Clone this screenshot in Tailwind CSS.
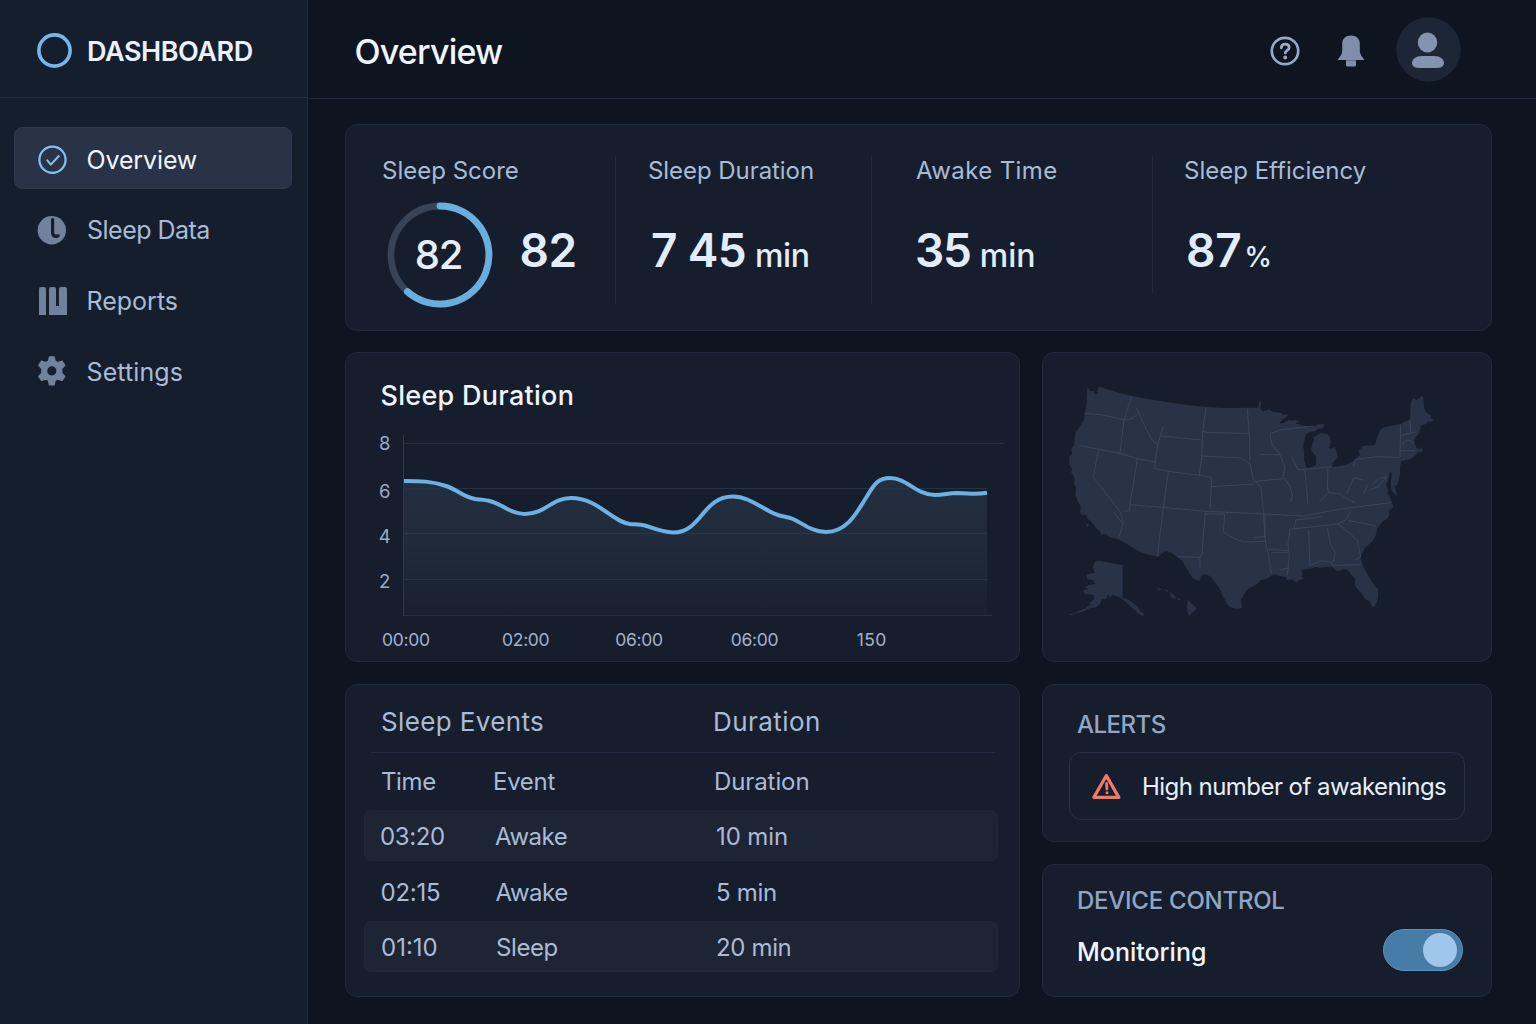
<!DOCTYPE html>
<html lang="en">
<head>
<meta charset="utf-8">
<title>Sleep Dashboard</title>
<script src="https://cdn.jsdelivr.net/npm/@tailwindcss/browser@4"></script>
</head>
<body class="w-[1536px] h-[1024px] overflow-hidden bg-[#0e1420] font-['Inter',sans-serif] text-[#a9bbd6] leading-none whitespace-nowrap flex">

<!-- Sidebar -->
<aside class="w-[308px] h-full shrink-0 bg-[#151e2d] border-r border-[#222b3d]">
  <div class="h-[98px] border-b border-[#253044] flex items-center pl-[37px] gap-[15px]">
    <svg class="size-[35px] shrink-0 mt-[4px]" viewBox="0 0 35 35" fill="none"><circle cx="17.5" cy="17.5" r="15.6" stroke="#74b7ea" stroke-width="3.6"/></svg>
    <span class="text-[27px] font-semibold text-[#eaf1fd] tracking-[-0.45px] mt-[5px]">DASHBOARD</span>
  </div>
  <nav class="pt-[29px] pl-[14px] flex flex-col">
    <a class="h-[62px] w-[278px] rounded-[8px] bg-[#293347] border border-[#2e384c] flex items-center pl-[22px]">
      <svg class="size-[30px] shrink-0 mt-[4px]" viewBox="0 0 30 30" fill="none" stroke="#85c1ee" stroke-linecap="round" stroke-linejoin="round"><circle cx="15.5" cy="14.8" r="13.1" stroke-width="2.2"/><path d="M10.2 15.2l3.6 4.4 8-8.6" stroke-width="2"/></svg>
      <span class="text-[25px] tracking-[-0.13px] text-[#eff4fd] ml-[19.500px] mt-[4px]">Overview</span>
    </a>
    <a class="h-[71px] mt-[5px] flex items-center pl-[23px]">
      <svg class="size-[30px] shrink-0" viewBox="0 0 30 30"><circle cx="14.8" cy="15.2" r="14.2" fill="#71829d"/><path d="M15.6 4.500v12.900q0 3.800 3.600 4l2-.6" fill="none" stroke="#151e2d" stroke-width="3.2" stroke-linecap="round" stroke-linejoin="round"/></svg>
      <span class="text-[25px] tracking-[-0.51px] ml-[20px] mt-[1px]">Sleep Data</span>
    </a>
    <a class="h-[71px] flex items-center pl-[23px]">
      <svg class="size-[30px] shrink-0 mt-[1px]" viewBox="0 0 30 30" fill="#71829d"><path d="M2 3a2 2 0 0 1 2-2h3a2 2 0 0 1 2 2v26H2zM12 3a2 2 0 0 1 2-2h3a2 2 0 0 1 2 2v17h3V3a2 2 0 0 1 2-2h4a2 2 0 0 1 2 2v26H12z"/></svg>
      <span class="text-[25px] ml-[19.5px] mt-[1px]">Reports</span>
    </a>
    <a class="h-[71px] flex items-center pl-[23px]">
      <svg class="size-[30px] shrink-0 -mt-[2px]" viewBox="0 0 30 30"><path fill="#71829d" fill-rule="evenodd" stroke="#71829d" stroke-width="1.2" stroke-linejoin="round" d="M12.4 .8h4.8l.9 4.3 2.7 1.5 4.3-1.5 2.8 4.2-3.1 3.3v4.6l3.1 3.1-2.8 4.2-4.3-1.4-2.7 1.5-.9 4.4h-4.8l-.9-4.4-2.7-1.5-4.3 1.4-2.8-4.2 3.1-3.1v-4.6L1.700 9.300l2.800-4.200 4.300 1.500 2.700-1.500zM14.800 9.700a5.200 5.200 0 1 0 0 10.400 5.200 5.200 0 0 0 0-10.400z"/></svg>
      <span class="text-[25px] tracking-[0.1px] ml-[19.500px] mt-[1px]">Settings</span>
    </a>
  </nav>
</aside>

<div class="flex-1 min-w-0 flex flex-col">
  <!-- Top bar -->
  <header class="h-[99px] shrink-0 border-b border-[#1f2a3d] flex items-center pl-[46px] pr-[75px]">
    <h1 class="text-[34px] tracking-[-0.8px] font-medium text-[#f0f5fd] mt-[5px] ml-[0.5px]">Overview</h1>
    <div class="ml-auto flex items-center">
      <svg class="size-[30px] mt-[3px]" viewBox="0 0 30 30" fill="none"><circle cx="15" cy="15" r="13.200" stroke="#97a9c5" stroke-width="2.700"/><path d="M11.200 11.800c.300-2.400 1.900-3.600 4-3.600 2.300 0 4 1.300 4 3.400 0 2.700-3.900 2.900-3.900 5.400" stroke="#97a9c5" stroke-width="2.800" stroke-linecap="round"/><circle cx="15.200" cy="21.500" r="1.900" fill="#97a9c5"/></svg>
      <svg class="w-[28px] h-[32px] ml-[37px] mt-[3px]" viewBox="0 0 28 32" fill="#7f8fab"><path d="M5.200 9c0-5.500 3.500-8.500 8.800-8.500s8.800 3 8.800 8.500v7c0 3 2.200 5.700 4.700 9H.5c2.500-3.300 4.700-6 4.700-9z"/><path d="M9 25.300h10V30q0 1.500-1.500 1.500h-7Q9 31.500 9 30z"/></svg>
      <svg class="size-[65px] ml-[31px] mt-[1px]" viewBox="0 0 65 65" fill="#8494ae"><circle cx="32.500" cy="32.500" r="32.200" fill="#1c2637"/><ellipse cx="31.500" cy="25.500" rx="9.700" ry="10"/><path d="M26 39h12c6 0 10 3 10 7 0 3-2.500 4.800-6 4.800-5 .4-15 .4-20 0-3.500 0-6-1.800-6-4.800 0-4 4-7 10-7z"/></svg>
    </div>
  </header>

  <main class="pl-[37px] pt-[25px] flex flex-col gap-[21px]">
    <!-- Key figures -->
    <section class="w-[1147px] h-[207px] rounded-[12px] bg-[#161e2d] border border-[#202a3d] flex">
      <div class="w-[269px] pl-[36px] pt-[34px]">
        <div class="text-[24px]">Sleep Score</div>
        <div class="mt-[19px] h-[106px] flex items-center">
          <div class="ml-[4.5px] size-[106px] grid place-items-center">
            <svg class="size-[106px] col-start-1 row-start-1" viewBox="-53 -53 106 106" fill="none" stroke-width="6.800"><circle r="49" stroke="#374356"/><path d="M0-49A49 49 0 1 1-32.600 36.600" stroke="#68aedf" stroke-linecap="round"/></svg>
            <span class="col-start-1 row-start-1 text-[40px] tracking-[-1.2px] font-medium text-[#e6eefb] -ml-[2px]">82</span>
          </div>
          <span class="ml-[27px] pb-[11px] text-[46px] font-semibold tracking-[-0.5px] text-[#e3ecfb]">82</span>
        </div>
      </div>
      <div class="w-px h-[148px] mt-[31px] bg-[#222c3f]"></div>
      <div class="w-[255px] pl-[32px] pt-[34px]">
        <div class="text-[24px] tracking-[-0.06px]">Sleep Duration</div>
        <div class="mt-[44px] flex items-baseline text-[#e3ecfb]">
          <span class="ml-[3px] text-[46px] tracking-[-0.7px] font-semibold">7 45</span>
          <span class="ml-[9px] text-[32px] font-medium tracking-[-0.3px]">min</span>
        </div>
      </div>
      <div class="w-px h-[148px] mt-[31px] bg-[#1f293b]"></div>
      <div class="w-[280px] pl-[44px] pt-[34px]">
        <div class="text-[24px] tracking-[0.38px]">Awake Time</div>
        <div class="mt-[44px] flex items-baseline text-[#e3ecfb]">
          <span class="-ml-[1px] text-[46px] tracking-[-1.2px] font-semibold">35</span>
          <span class="ml-[9px] text-[32px] font-medium">min</span>
        </div>
      </div>
      <div class="w-px h-[138px] mt-[31px] bg-[#1f293b]"></div>
      <div class="pl-[31px] pt-[34px]">
        <div class="text-[24px]">Sleep Efficiency</div>
        <div class="mt-[44px] flex items-baseline text-[#e3ecfb]">
          <span class="ml-[2px] text-[46px] tracking-[-0.3px] font-semibold">87</span>
          <span class="ml-[3px] text-[28px] font-medium">%</span>
        </div>
      </div>
    </section>

    <div class="flex gap-[22px]">
      <!-- Duration chart -->
      <section class="w-[675px] h-[310px] rounded-[12px] bg-[#161e2d] border border-[#202a3f]">
        <svg class="w-[673px] h-[308px]" viewBox="346 353 673 308" fill="none" font-family="Inter, sans-serif">
          <defs><linearGradient id="area" x1="0" y1="478" x2="0" y2="615" gradientUnits="userSpaceOnUse"><stop offset="0" stop-color="#232f40"/><stop offset=".5" stop-color="#202a3b"/><stop offset="1" stop-color="#19212f"/></linearGradient></defs>
          <path fill="url(#area)" d="M404 481C420 481 432 481 446 486C458 490 463 497 475 499C488 500 492 501 502 506C510 511 517 514 525 514C545 514 552 498 571 498C598 498 612 522 630 524C636 524.500 640 524.500 645 525.500C655 529 664 532.500 673 532.500C702 532.500 702 496.500 733 496.500C750 496.500 763 510 778 515C783 516.500 788 517 793 519C804 524 812 532 826 532C845 532 855 516 864 501C873 487 876 478 890 478C907 478 916 495 935 495C944 495 948 493 957 493C967 493.500 975 494.500 987 492.700V615H404z"/>
          <path stroke="#263143" d="M404 443.500H1004M404 488.500H987M404 579.500H987M403 615.500H992"/>
          <path stroke="#2b3648" d="M404 533.500H987"/>
          <path stroke="#2d384b" d="M403.500 435V616"/>
          <path stroke="#6cb1e3" stroke-width="4" d="M404 481C420 481 432 481 446 486C458 490 463 497 475 499C488 500 492 501 502 506C510 511 517 514 525 514C545 514 552 498 571 498C598 498 612 522 630 524C636 524.500 640 524.500 645 525.500C655 529 664 532.500 673 532.500C702 532.500 702 496.500 733 496.500C750 496.500 763 510 778 515C783 516.500 788 517 793 519C804 524 812 532 826 532C845 532 855 516 864 501C873 487 876 478 890 478C907 478 916 495 935 495C944 495 948 493 957 493C967 493.500 975 494.500 987 492.700"/>
          <text class="tracking-[0.28px]" x="380.500" y="405" font-size="27" font-weight="500" fill="#eff4fd">Sleep Duration</text>
          <g font-size="18.500" fill="#9aabc4" text-anchor="middle">
            <text x="384.700" y="449.500">8</text><text x="384.700" y="498">6</text><text x="384.700" y="543">4</text><text x="384.700" y="587.500">2</text>
          </g>
          <g class="tracking-[-0.3px]" font-size="17.500" fill="#a3b3cc" text-anchor="middle">
            <text x="405.800" y="646.400">00:00</text><text x="525.700" y="646.400">02:00</text><text x="639" y="646.400">06:00</text><text x="754.500" y="646.400">06:00</text><text class="tracking-[0.3px]" x="871.700" y="646.400">150</text>
          </g>
        </svg>
      </section>

      <!-- Region map -->
      <section class="w-[450px] h-[310px] rounded-[12px] bg-[#161e2d] border border-[#202a3f]">
        <svg class="w-[448px] h-[308px]" viewBox="1043 353 448 308">
          <g transform="translate(1050 370) scale(.33333)">
            <path fill="#283348" d="M112 52L120 62 130 64 134 72 143 71 142 60 148 50 196 65 245 78 300 88 350 96 405 104 460 110 520 114 625 113 628 92 633 98 632 118 640 124 658 118 668 126 690 128 700 134 716 133 708 142 696 150 688 161 704 158 716 150 728 152 738 149 750 156 736 160 752 165 772 168 788 170 808 162 824 163 820 174 806 176 794 184 780 186 768 192 764 206 760 230 763 250 762 270 770 294 785 291 798 285 799 262 790 250 783 240 786 224 792 210 790 202 802 194 812 189 832 191 839 200 842 215 838 234 846 236 855 230 860 248 863 262 852 274 845 290 870 288 892 283 915 270 930 255 925 243 940 228 975 225 982 200 990 180 1002 172 1020 168 1050 163 1066 154 1080 150 1082 100 1090 84 1100 90 1115 77 1120 82 1123 115 1130 130 1142 136 1142 144 1154 150 1140 156 1135 152 1128 162 1112 168 1110 182 1103 196 1092 208 1096 224 1100 234 1112 238 1112 232 1119 238 1116 246 1104 246 1094 258 1080 268 1054 274 1050 290 1050 312 1042 344 1034 348 1042 380 1024 360 1022 336 1026 312 1020 304 1014 330 1008 346 1016 364 1010 366 1022 384 1026 400 1030 412 1018 420 1018 436 1010 448 996 456 982 476 976 500 966 516 946 532 936 548 932 562 938 584 946 602 962 630 976 650 984 656 984 682 980 698 972 712 964 708 960 694 946 688 936 672 922 656 914 646 916 628 902 612 894 600 880 598 862 604 846 592 830 590 812 594 796 590 784 596 768 596 752 602 760 612 754 620 762 626 748 630 738 637 726 628 712 630 706 620 690 618 676 612 660 620 648 628 630 630 622 642 606 650 590 660 580 678 572 690 576 714 560 716 540 712 530 700 520 680 508 655 494 636 484 620 470 614 460 612 452 620 450 632 438 630 428 624 418 608 410 595 396 572 380 560 366 548 346 544 334 552 325 560 296 554 270 545 240 528 210 510 192 504 180 502 168 492 154 494 150 484 138 474 130 462 122 452 112 446 108 434 94 434 90 424 92 408 84 396 76 374 78 352 72 340 74 324 64 308 66 296 58 284 58 262 66 252 64 236 72 226 76 190 88 172 102 148 106 124 110 100z"/>
            <path fill="#283348" d="M134 576L146 572 180 578 218 586 218 682 232 688 250 698 262 710 274 726 284 734 276 738 260 726 244 712 226 694 206 680 186 674 180 686 176 672 168 688 156 688 150 702 138 712 120 714 96 726 70 732 84 724 104 716 124 702 116 700 134 688 128 674 106 672 98 662 114 658 104 650 122 644 136 642 128 630 112 628 110 614 134 608 128 592zM56 734l14-4-4 5zM318 652l12 4 8 5-10-2zM344 658l14 4-8 3zM360 666l12 8 8 10-10 2-8-6zM382 684l10 4-8 2zM414 690l12 12 14 14-14 12-10 10-4-16-1-14zM106 456l12 8-6 6z"/>
            <path fill="none" stroke="#3d4a5f" stroke-width="2.400" stroke-linejoin="round" d="M104 130L150 134 190 142 222 150 240 148 262 134M245 78L222 150 210 250M258 112L290 180 308 212 320 222M340 170L324 220 316 276 314 296M90 226L146 238 210 250 262 266 316 276M146 238L130 322 210 424 220 456 208 500M190 426L216 458M262 266L240 404 238 422 218 424M240 404L335 412 466 424 645 432 760 438 880 416 1024 398M314 296L355 304 340 410 322 560M355 304L448 316 484 322 484 350 480 418M332 198L455 210M468 112L458 184 455 262 448 316M458 184L475 188 596 190M455 258L570 264 600 280 610 330 632 350 638 400 640 430M484 350L612 342M592 116L598 200 600 272M466 424L456 550 450 562 384 560M450 562L450 594M466 432H524L520 486 550 504 580 516 645 514M640 432L646 514 656 560 664 612M645 432L645 500 612 502M618 334L700 326M628 254H690L704 290 700 320 720 350 728 376 722 396M690 252L666 224 660 192 690 180 790 168M726 260L744 300 764 298M764 298L774 400M764 298L845 290M834 294L832 350 836 368 808 396M836 368L866 370 916 400M890 374L910 324 940 330M940 374L952 344M958 360L984 350 1010 320 984 326 968 344M910 290L916 268 980 260 1048 262M1052 164L1050 262M1080 150L1082 190M1054 196L1094 186M1056 222L1072 210 1090 216M1052 242H1096M720 478L864 462 890 448 902 424M732 478L738 450 820 440M864 462L900 490 922 512 932 560 916 570M896 452L940 460 978 468M776 480L780 590M832 476L842 524 856 550 850 576M784 584L814 572 842 576 850 586 932 584M720 478L714 520 718 560 712 616M656 538L714 542M664 548H714M690 600L716 594"/>
          </g>
        </svg>
      </section>
    </div>

    <div class="flex gap-[22px] mt-[1px]">
      <!-- Sleep events -->
      <section class="w-[675px] h-[313px] rounded-[12px] bg-[#161e2d] border border-[#202a3d] px-[18px]">
        <div class="h-[68px] ml-[7px] mr-[6px] border-b border-[#232e42] flex items-center pt-[6px] pl-[10px] text-[26px]">
          <span class="w-[332px] tracking-[0.36px]">Sleep Events</span><span class="tracking-[0.45px]">Duration</span>
        </div>
        <div class="h-[57px] flex items-center pl-[17px] pt-[1px] text-[24px]"><span class="w-[112px] tracking-[-0.4px]">Time</span><span class="w-[221px] tracking-[-0.3px]">Event</span><span class="tracking-[-0.1px]">Duration</span></div>
        <div class="h-[51px] w-[634px] rounded-[7px] bg-[#1d2434] border border-[#202838] flex items-center pt-[3px] pl-[15px] text-[24px]"><span class="w-[115px] tracking-[-0.38px]">03:20</span><span class="w-[221px] tracking-[-0.5px]">Awake</span><span class="tracking-[-0.1px]">10 min</span></div>
        <div class="h-[60px] flex items-center pt-[3px] pl-[16.5px] text-[24px]"><span class="w-[115px] tracking-[-0.24px]">02:15</span><span class="w-[220.5px] tracking-[-0.5px]">Awake</span><span class="tracking-[-0.3px]">5 min</span></div>
        <div class="h-[51px] w-[634px] rounded-[7px] bg-[#1d2434] border border-[#202838] flex items-center pt-[3px] pl-[16px] text-[24px]"><span class="w-[115px]">01:10</span><span class="w-[220px] tracking-[-0.4px]">Sleep</span><span class="tracking-[-0.35px]">20 min</span></div>
      </section>

      <div class="flex flex-col gap-[22px]">
        <!-- Alerts -->
        <section class="w-[450px] h-[158px] rounded-[12px] bg-[#161e2d] border border-[#202a3d] pl-[26px] pt-[28px]">
          <h2 class="text-[24px] ml-[8px] font-medium tracking-[-0.5px] text-[#92a6c4]">ALERTS</h2>
          <div class="mt-[15px] w-[396px] h-[68px] rounded-[12px] border border-[#263145] flex items-center pl-[22px]">
            <svg class="w-[29px] h-[27px] shrink-0" viewBox="0 0 29 27" fill="none" stroke="#ee7a68" stroke-linejoin="round" stroke-linecap="round"><path d="M14.300 2.700L26.800 24.300H1.900z" stroke-width="3.300"/><path d="M14.500 10.500l.5 5.500" stroke-width="2.800"/><path d="M15 19.800h.01" stroke-width="3"/></svg>
            <span class="text-[24px] tracking-[-0.55px] text-[#e8effb] ml-[21px] mt-[2px]">High number of awakenings</span>
          </div>
        </section>
        <!-- Device control -->
        <section class="w-[450px] h-[133px] rounded-[12px] bg-[#161e2d] border border-[#202a3d] pl-[34px] pr-[28px] pt-[24px]">
          <h2 class="text-[24px] font-medium tracking-[-0.25px] text-[#92a6c4]">DEVICE CONTROL</h2>
          <div class="mt-[16px] flex items-center justify-between">
            <span class="text-[25px] font-medium text-[#f0f5fd] mt-[4px]">Monitoring</span>
            <span class="w-[80px] h-[42px] rounded-full bg-[#457ca8] border border-[#5a92bd] flex items-center justify-end pr-[5px]"><span class="size-[34px] rounded-full bg-[#a0c7eb]"></span></span>
          </div>
        </section>
      </div>
    </div>
  </main>
</div>
</body>
</html>
